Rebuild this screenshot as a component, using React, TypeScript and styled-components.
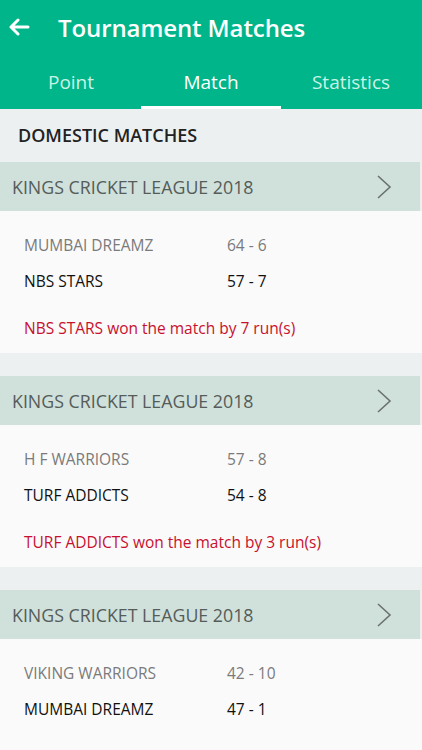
import styled, { createGlobalStyle } from "styled-components";

const GlobalStyle = createGlobalStyle`
  html, body {
    margin: 0;
    padding: 0;
    background: #edf0f1;
    font-family: "Open Sans", "Noto Sans", sans-serif;
  }
  * { box-sizing: border-box; }
`;

const matches = [
  {
    league: "KINGS CRICKET LEAGUE 2018",
    home: { name: "MUMBAI DREAMZ", score: "64 - 6" },
    away: { name: "NBS STARS", score: "57 - 7" },
    result: "NBS STARS won the match by 7 run(s)",
  },
  {
    league: "KINGS CRICKET LEAGUE 2018",
    home: { name: "H F WARRIORS", score: "57 - 8" },
    away: { name: "TURF ADDICTS", score: "54 - 8" },
    result: "TURF ADDICTS won the match by 3 run(s)",
  },
  {
    league: "KINGS CRICKET LEAGUE 2018",
    home: { name: "VIKING WARRIORS", score: "42 - 10" },
    away: { name: "MUMBAI DREAMZ", score: "47 - 1" },
    result: "",
  },
];

const tabs = ["Point", "Match", "Statistics"];

const App = () => {
  return (
    <StyledPage>
      <GlobalStyle />
      <StyledHeader>
        <StyledTitleRow>
          <StyledBack>
            <svg width="22" height="18" viewBox="0 0 22 18">
              <path
                d="M20 9H3M10 2L3 9l7 7"
                fill="none"
                stroke="#fff"
                strokeWidth="3"
                strokeLinecap="round"
                strokeLinejoin="round"
              />
            </svg>
          </StyledBack>
          <StyledTitle>Tournament Matches</StyledTitle>
        </StyledTitleRow>
        <StyledTabs>
          {tabs.map((t) => (
            <StyledTab key={t} active={t === "Match"}>
              {t}
            </StyledTab>
          ))}
        </StyledTabs>
      </StyledHeader>

      <StyledSection>DOMESTIC MATCHES</StyledSection>

      {matches.map((m, i) => (
        <StyledBlock key={i}>
          <StyledLeague>
            <span>{m.league}</span>
            <svg width="16" height="26" viewBox="0 0 16 26">
              <path
                d="M2 2l12 11L2 24"
                fill="none"
                stroke="#6a716e"
                strokeWidth="1.6"
              />
            </svg>
          </StyledLeague>
          <StyledCard>
            <StyledTeamRow muted>
              <StyledName>{m.home.name}</StyledName>
              <span>{m.home.score}</span>
            </StyledTeamRow>
            <StyledTeamRow>
              <StyledName>{m.away.name}</StyledName>
              <span>{m.away.score}</span>
            </StyledTeamRow>
            {m.result && <StyledResult>{m.result}</StyledResult>}
          </StyledCard>
        </StyledBlock>
      ))}
    </StyledPage>
  );
};

export default App;

const StyledPage = styled.main`
  width: 422px;
  height: 750px;
  overflow: hidden;
  background: #edf0f1;
`;

const StyledHeader = styled.header`
  background: #00b589;
  color: #fff;
  height: 109px;
  display: flex;
  flex-direction: column;
`;

const StyledTitleRow = styled.div`
  display: flex;
  align-items: center;
  height: 56px;
  padding: 0 0 2px 8px;
`;

const StyledBack = styled.div`
  width: 50px;
  display: flex;
  align-items: center;
`;

const StyledTitle = styled.h1`
  margin: 0;
  font-size: 24px;
  font-weight: 600;
  letter-spacing: -0.1px;
`;

const StyledTabs = styled.nav`
  display: flex;
  flex: 1;
  padding: 0 1px;
`;

const StyledTab = styled.div<{ active?: boolean }>`
  flex: 1;
  display: flex;
  align-items: center;
  justify-content: center;
  font-size: 19px;
  padding-top: 1px;
  color: ${(p) => (p.active ? "#ffffff" : "#c9f3e6")};
  border-bottom: 3px solid ${(p) => (p.active ? "#ffffff" : "transparent")};
`;

const StyledSection = styled.h2`
  margin: 0;
  height: 53px;
  display: flex;
  align-items: center;
  padding: 0 18px 2px;
  font-size: 18px;
  font-weight: 600;
  color: #222;
`;

const StyledBlock = styled.section`
  margin-bottom: 23px;
`;

const StyledLeague = styled.div`
  height: 49px;
  width: 420px;
  background: #d0e1dc;
  display: flex;
  align-items: center;
  justify-content: space-between;
  padding: 0 28px 0 12px;
  font-size: 17.8px;
  color: #555c59;
`;

const StyledCard = styled.div`
  background: #fafafa;
  height: 142px;
  padding: 16px 24px 0;
`;

const StyledTeamRow = styled.div<{ muted?: boolean }>`
  display: flex;
  align-items: center;
  height: 36px;
  font-size: 15.5px;
  color: ${(p) => (p.muted ? "#7a7a7a" : "#111")};
`;

const StyledName = styled.span`
  width: 203px;
`;

const StyledResult = styled.div`
  margin-top: 18px;
  font-size: 15.5px;
  color: #c8102e;
`;
